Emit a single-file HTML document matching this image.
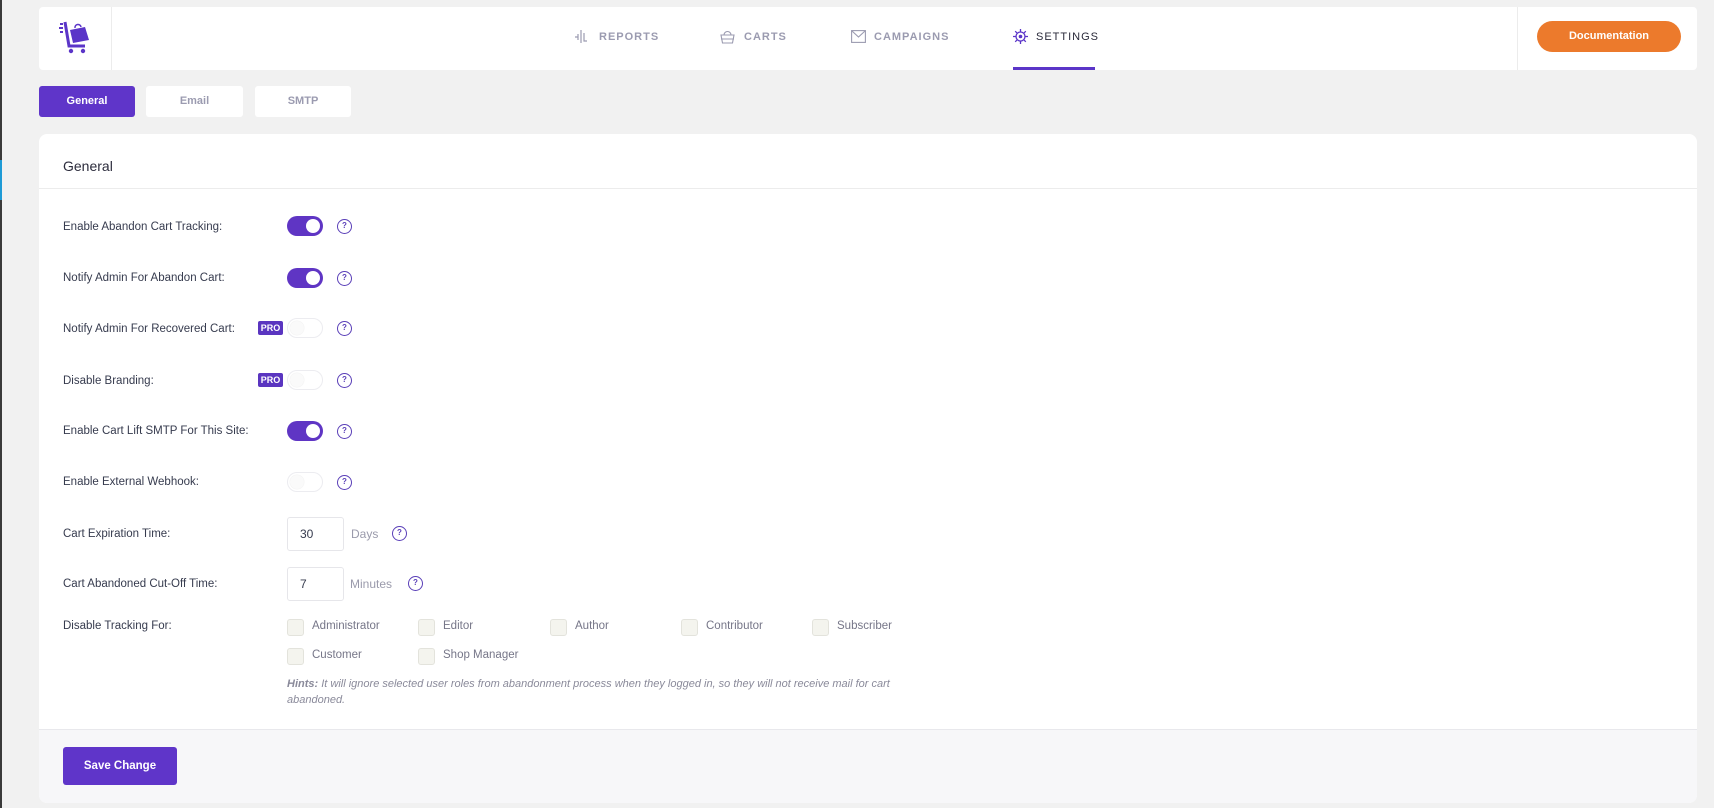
<!DOCTYPE html>
<html><head><meta charset="utf-8"><style>
*{box-sizing:border-box;margin:0;padding:0}
body{width:1714px;height:808px;background:#f1f1f1;font-family:"Liberation Sans",sans-serif;position:relative;overflow:hidden;color:#363b4e}
.a{position:absolute}
.hdr{left:39px;top:7px;width:1658px;height:63px;background:#fff;border-radius:4px}
.nav{top:30px;font-size:11px;letter-spacing:1px;font-weight:bold;color:#9b9bb0;line-height:14px}
.tab{top:86px;height:31px;width:96px;border-radius:3px;background:#fff;font-size:11px;font-weight:bold;color:#9b9bb0;text-align:center;line-height:31px}
.card{left:39px;top:134px;width:1658px;height:669px;background:#fff;border-radius:8px;overflow:hidden}
.lbl{left:63px;font-size:11.5px;color:#363b4e;line-height:14px}
.tg{left:287px;width:36px;height:20px;border-radius:10px;background:#5f35c4}
.tg::after{content:"";position:absolute;right:3px;top:3px;width:14px;height:14px;border-radius:50%;background:#fff}
.tg.off{background:#fff;border:1px solid #ececf0}
.tg.off::after{left:2px;right:auto;top:2px;background:#fafafa;box-shadow:0 0 1px #ddd}
.hp{width:15px;height:15px;border:1.3px solid #5a3fb8;border-radius:50%;font-size:8px;color:#5a3fb8;text-align:center;line-height:12px;font-weight:bold}
.pro{left:258px;width:25px;height:14px;background:#5a35c0;color:#fff;font-size:9px;font-weight:bold;text-align:center;line-height:14px;border-radius:2px}
.inp{left:287px;width:57px;height:34px;border:1px solid #e6e6ea;border-radius:3px;font-size:12px;padding-left:12px;line-height:32px}
.unit{font-size:12px;color:#9a9aab}
.cb{width:17px;height:17px;border:1px solid #e3e3dc;background:#f4f4ee;border-radius:3px}
.cl{font-size:11.5px;color:#767688}
</style></head><body>
<div class="a" style="left:0;top:0;width:2px;height:808px;background:#3a3a3a"></div>
<div class="a" style="left:0;top:160px;width:2px;height:40px;background:#1f9bd6"></div>
<div class="a hdr"></div>
<div class="a" style="left:111px;top:7px;width:1px;height:63px;background:#ececec"></div>
<div class="a" style="left:1517px;top:7px;width:1px;height:63px;background:#ececec"></div>
<svg class="a" style="left:58px;top:20px" width="34" height="36" viewBox="0 0 34 36"><path d="M2 4h3M1 8h4M2 12h3" stroke="#5b35c8" stroke-width="2"/><path d="M7 2l4 24h16" stroke="#5b35c8" stroke-width="3" fill="none"/><path d="M12 10l15-3 4 13-16 3z" fill="#5b35c8"/><path d="M17 8a3 3 0 0 1 6-1" stroke="#5b35c8" fill="none" stroke-width="1.5"/><circle cx="13" cy="31" r="2.2" fill="#5b35c8"/><circle cx="25" cy="31" r="2.2" fill="#5b35c8"/></svg>
<svg class="a" style="left:575px;top:30px" width="14" height="13" viewBox="0 0 14 13"><path d="M0 7h3M3 4v6M6 0v13M9 3v8l3 0" stroke="#9b9bb0" stroke-width="1.2" fill="none"/></svg>
<div class="a nav" style="left:599px">REPORTS</div>
<svg class="a" style="left:720px;top:29px" width="15" height="15" viewBox="0 0 15 15"><path d="M1 6h13l-1.5 8h-10z M1 10h13 M4 6a3.5 3.5 0 0 1 7 0" stroke="#9b9bb0" stroke-width="1.1" fill="none"/></svg>
<div class="a nav" style="left:744px">CARTS</div>
<svg class="a" style="left:851px;top:30px" width="15" height="13" viewBox="0 0 15 13"><rect x="0.6" y="0.6" width="13.8" height="11.8" stroke="#9b9bb0" fill="none" stroke-width="1.1"/><path d="M1 1l6.5 6 6.5-6" stroke="#9b9bb0" fill="none" stroke-width="1.1"/></svg>
<div class="a nav" style="left:874px">CAMPAIGNS</div>
<svg class="a" style="left:1013px;top:29px" width="15" height="15" viewBox="0 0 15 15"><circle cx="7.5" cy="7.5" r="4.5" stroke="#5b35c8" fill="none" stroke-width="1.3"/><circle cx="7.5" cy="7.5" r="1.8" fill="#5b35c8"/><path d="M7.5 0v3M7.5 12v3M0 7.5h3M12 7.5h3M2.2 2.2l2 2M10.8 10.8l2 2M2.2 12.8l2-2M10.8 4.2l2-2" stroke="#5b35c8" stroke-width="1.3"/></svg>
<div class="a nav" style="left:1036px;color:#2a2a3a;font-weight:normal">SETTINGS</div>
<div class="a" style="left:1013px;top:67px;width:82px;height:3px;background:#5b35c8"></div>
<div class="a" style="left:1537px;top:21px;width:144px;height:31px;border-radius:16px;background:#ec7a2c;color:#fff;font-size:11px;font-weight:bold;text-align:center;line-height:31px">Documentation</div>
<div class="a tab" style="left:39px;background:#5f35c9;color:#fff">General</div>
<div class="a tab" style="left:146px;width:97px">Email</div>
<div class="a tab" style="left:255px">SMTP</div>
<div class="a card">
 <div class="a" style="left:24px;top:24px;font-size:14px;color:#2c2c3c">General</div>
 <div class="a" style="left:0;top:54px;width:1658px;height:1px;background:#ececec"></div>
 <div class="a" style="left:0;top:595px;width:1658px;height:74px;background:#f7f7f9;border-top:1px solid #e8e8ec"></div>
 <div class="a" style="left:24px;top:613px;width:114px;height:38px;border-radius:3px;background:#5f35c9;color:#fff;font-size:11.5px;font-weight:bold;text-align:center;line-height:38px">Save Change</div>
</div>
<div class="a lbl" style="top:220px">Enable Abandon Cart Tracking:</div>
<div class="a tg" style="top:216px"></div><div class="a hp" style="left:337px;top:219px">?</div>
<div class="a lbl" style="top:271px">Notify Admin For Abandon Cart:</div>
<div class="a tg" style="top:268px"></div><div class="a hp" style="left:337px;top:271px">?</div>
<div class="a lbl" style="top:322px">Notify Admin For Recovered Cart:</div>
<div class="a pro" style="top:321px">PRO</div><div class="a tg off" style="top:318px"></div><div class="a hp" style="left:337px;top:321px">?</div>
<div class="a lbl" style="top:374px">Disable Branding:</div>
<div class="a pro" style="top:373px">PRO</div><div class="a tg off" style="top:370px"></div><div class="a hp" style="left:337px;top:373px">?</div>
<div class="a lbl" style="top:424px">Enable Cart Lift SMTP For This Site:</div>
<div class="a tg" style="top:421px"></div><div class="a hp" style="left:337px;top:424px">?</div>
<div class="a lbl" style="top:475px">Enable External Webhook:</div>
<div class="a tg off" style="top:472px"></div><div class="a hp" style="left:337px;top:475px">?</div>
<div class="a lbl" style="top:527px">Cart Expiration Time:</div>
<div class="a inp" style="top:517px">30</div><div class="a unit" style="left:351px;top:527px">Days</div><div class="a hp" style="left:392px;top:526px">?</div>
<div class="a lbl" style="top:577px">Cart Abandoned Cut-Off Time:</div>
<div class="a inp" style="top:567px">7</div><div class="a unit" style="left:350px;top:577px">Minutes</div><div class="a hp" style="left:408px;top:576px">?</div>
<div class="a lbl" style="top:619px">Disable Tracking For:</div>
<div class="a cb" style="left:287px;top:619px"></div><div class="a cl" style="left:312px;top:620px">Administrator</div>
<div class="a cb" style="left:418px;top:619px"></div><div class="a cl" style="left:443px;top:620px">Editor</div>
<div class="a cb" style="left:550px;top:619px"></div><div class="a cl" style="left:575px;top:620px">Author</div>
<div class="a cb" style="left:681px;top:619px"></div><div class="a cl" style="left:706px;top:620px">Contributor</div>
<div class="a cb" style="left:812px;top:619px"></div><div class="a cl" style="left:837px;top:620px">Subscriber</div>
<div class="a cb" style="left:287px;top:648px"></div><div class="a cl" style="left:312px;top:649px">Customer</div>
<div class="a cb" style="left:418px;top:648px"></div><div class="a cl" style="left:443px;top:649px">Shop Manager</div>
<div class="a" style="left:287px;top:676px;width:625px;font-size:11px;font-style:italic;color:#8a8a9a;line-height:16px"><b>Hints:</b> It will ignore selected user roles from abandonment process when they logged in, so they will not receive mail for cart abandoned.</div>
</body></html>
